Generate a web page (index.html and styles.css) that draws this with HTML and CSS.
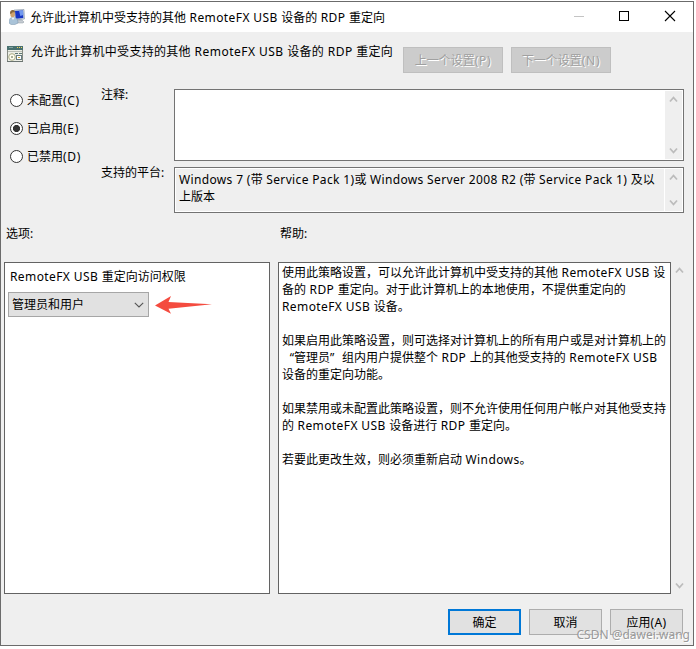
FILE: index.html
```html
<!DOCTYPE html>
<html lang="zh-CN">
<head>
<meta charset="utf-8">
<title>允许此计算机中受支持的其他 RemoteFX USB 设备的 RDP 重定向</title>
<link rel="stylesheet" href="styles.css">
</head>
<body>
<div class="window">
  <header class="titlebar">
    <svg class="app-icon" width="16" height="16" viewBox="0 0 16 16">
      <path d="M5 1l10-.5.5 9.500-9 1z" fill="#c9d3df" stroke="#8493a5" stroke-width=".6"/>
      <path d="M6 2l8-.5.3 7.500-7.500.7z" fill="#1736c4"/>
      <path d="M10 1.800l4-.3.3 4.500-3 1z" fill="#7199ee"/>
      <path d="M8 11h5l2 2-1 1H7z" fill="#c5cbd2" stroke="#8d98a3" stroke-width=".5"/>
      <path d="M0 14c0-4 1.500-6 4-6s5 2 5 6l-3 1.500H2z" fill="#a9c3d8" stroke="#7893aa" stroke-width=".5"/>
      <path d="M2.500 8.500L4 11l1.700-2.500z" fill="#f3f7fa"/>
      <ellipse cx="3.600" cy="5" rx="2.300" ry="3.300" fill="#cfa36b"/>
      <path d="M1 4.500C1 1.500 2.500.8 4 1s2.300 1.500 2 2.500C4.500 3 3 3 2 5z" fill="#87693f"/>
    </svg>
    <span class="title-text line">允许此计算机中受支持的其他<span class="en"> RemoteFX USB </span>设备的<span class="en"> RDP </span>重定向</span>
    <div class="caption">
      <svg width="138" height="30" viewBox="0 0 138 30" fill="none" shape-rendering="crispEdges">
        <path d="M18 14.500h10" stroke="#c4c4c4"/>
        <rect x="63.500" y="9.500" width="9" height="9" stroke="#000"/>
        <path d="M109 9l10 10M119 9l-10 10" stroke="#000" shape-rendering="auto" stroke-width="1.100"/>
      </svg>
    </div>
  </header>

  <section class="heading">
    <svg class="policy-icon" width="16" height="16" viewBox="0 0 16 16">
      <rect x=".5" y=".5" width="15" height="15" fill="#eceee6" stroke="#868a82"/>
      <rect x="0" y="0" width="16" height="4" fill="#48706f"/>
      <path d="M2 1.500h4" stroke="#84a5a3"/>
      <path d="M10 1.500h1M12 1.500h1M14 1.500h1" stroke="#f3d35c"/>
      <path d="M1 5.500h14" stroke="#b9bdb3"/>
      <path d="M8 7.500h3M12 7.500h3" stroke="#5e7774"/>
      <circle cx="5" cy="11" r="3.300" fill="#fffef0" stroke="#a9aa83"/>
      <circle cx="5" cy="11" r="1" fill="#8d947d"/>
      <rect x="9.500" y="9.500" width="5" height="4" fill="#fff" stroke="#667b80"/>
      <path d="M11 11.500h2" stroke="#c6a942"/>
      <path d="M0 15.500h16" stroke="#6b7471"/>
    </svg>
    <span class="heading-text line">允许此计算机中受支持的其他<span class="en"> RemoteFX USB </span>设备的<span class="en"> RDP </span>重定向</span>
    <button class="nav-btn" disabled>上一个设置<span class="en">(P)</span></button>
    <button class="nav-btn" disabled>下一个设置<span class="en">(N)</span></button>
  </section>

  <section class="state">
    <div class="radios">
      <label class="radio"><i class="dot"></i><span>未配置<span class="en">(C)</span></span></label>
      <label class="radio"><i class="dot on"></i><span>已启用<span class="en">(E)</span></span></label>
      <label class="radio"><i class="dot"></i><span>已禁用<span class="en">(D)</span></span></label>
    </div>
    <div class="labels"><span>注释:</span><span>支持的平台:</span></div>
    <div class="fields">
      <div class="field comment">
        <div class="field-text"></div>
        <div class="scroll">
          <svg width="9" height="7" viewBox="0 0 9 7"><path d="M1 5.500l3.500-4 3.500 4"/></svg>
          <svg width="9" height="7" viewBox="0 0 9 7"><path d="M1 1.500l3.500 4 3.500-4"/></svg>
        </div>
      </div>
      <div class="field platform">
        <div class="field-text"><span class="line"><span class="en">Windows 7 (</span>带<span class="en"> Service Pack 1)</span>或<span class="en"> Windows Server 2008 R2 (</span>带<span class="en"> Service Pack 1) </span>及以</span><span class="line">上版本</span></div>
        <div class="scroll">
          <svg width="9" height="7" viewBox="0 0 9 7"><path d="M1 5.500l3.500-4 3.500 4"/></svg>
          <svg width="9" height="7" viewBox="0 0 9 7"><path d="M1 1.500l3.500 4 3.500-4"/></svg>
        </div>
      </div>
    </div>
  </section>

  <section class="captions"><span class="cap-options">选项:</span><span>帮助:</span></section>

  <section class="panels">
    <div class="panel options">
      <div class="option-label line"><span class="en">RemoteFX USB </span>重定向访问权限</div>
      <div class="option-row">
        <div class="select"><span>管理员和用户</span>
          <svg width="10" height="6" viewBox="0 0 10 6" fill="none"><path d="M.8.8L5 5 9.200.8" stroke="#555" stroke-width="1.100"/></svg>
        </div>
        <svg class="arrow" width="58" height="20" viewBox="0 0 58 20"><path d="M0 10.500L16 1l-2.500 6L57 9.300 13.500 13.800l2.500 5z" fill="#f44b3f"/></svg>
      </div>
    </div>
    <div class="panel help">
      <p><span class="line">使用此策略设置，可以允许此计算机中受支持的其他<span class="en"> RemoteFX USB </span>设</span><span class="line">备的<span class="en"> RDP </span>重定向。对于此计算机上的本地使用，不提供重定向的</span><span class="line"><span class="en">RemoteFX USB </span>设备。</span></p>
      <p><span class="line">如果启用此策略设置，则可选择对计算机上的所有用户或是对计算机上的</span><span class="line"><span class="quote open">“</span>管理员<span class="quote">”</span>组内用户提供整个<span class="en"> RDP </span>上的其他受支持的<span class="en"> RemoteFX USB</span></span><span class="line">设备的重定向功能。</span></p>
      <p><span class="line">如果禁用或未配置此策略设置，则不允许使用任何用户帐户对其他受支持</span><span class="line">的<span class="en"> RemoteFX USB </span>设备进行<span class="en"> RDP </span>重定向。</span></p>
      <p><span class="line">若要此更改生效，则必须重新启动<span class="en"> Windows</span>。</span></p>
    </div>
    <div class="scroll tall">
      <svg width="9" height="7" viewBox="0 0 9 7"><path d="M1 5.500l3.500-4 3.500 4"/></svg>
      <svg width="9" height="7" viewBox="0 0 9 7"><path d="M1 1.500l3.500 4 3.500-4"/></svg>
    </div>
  </section>

  <footer class="actions">
    <button class="btn primary">确定</button>
    <button class="btn">取消</button>
    <button class="btn">应用<span class="en">(A)</span></button>
  </footer>
  <div class="watermark">CSDN @dawei.wang</div>
</div>
</body>
</html>
```

FILE: styles.css
```css
* { box-sizing: border-box; }
body {
  margin: 0;
  padding-top: 1px;
  background: #fff;
  color: #000;
  font: 12px/17px "Noto Sans", "Noto Sans CJK SC", sans-serif;
}
svg { display: block; flex: none; }
.line { display: block; white-space: nowrap; }
.en { letter-spacing: .4px; }
.window {
  position: relative;
  width: 694px;
  height: 645px;
  border: 1px solid #6b6b6b;
  background: #efefef;
}
.titlebar {
  display: flex;
  align-items: center;
  height: 30px;
  padding-left: 8px;
  background: #fff;
}
.title-text { margin-left: 5px; }
.caption { margin-left: auto; }
.caption svg { margin-right: -1px; }

.heading { display: flex; height: 57px; padding: 15px 0 0 6px; }
.policy-icon { margin-top: -1px; }
.heading-text { width: 372px; margin: -4px 0 0 8px; letter-spacing: .3px; }
.heading-text .en { letter-spacing: .48px; }
.nav-btn {
  width: 100px;
  height: 26px;
  margin-right: 8px;
  padding: 0;
  border: 1px solid #bfbfbf;
  background: #ccc;
  color: #a0a0a0;
  font: inherit;
  text-shadow: 1px 1px #fff;
}

.state { display: flex; height: 124px; }
.radios { width: 100px; padding: 2px 0 0 9px; }
.radio { display: flex; align-items: center; gap: 4px; height: 28px; margin-top: -5px; margin-bottom: 5px; white-space: nowrap; }
.radio .en, .nav-btn .en { letter-spacing: .7px; }
.dot { width: 13px; height: 13px; border: 1px solid #333; border-radius: 50%; background: #fff; }
.dot.on { background: radial-gradient(circle, #333 3.2px, #fff 3.9px); }
.labels { display: flex; flex-direction: column; gap: 61px; width: 73px; margin-top: -3px; white-space: nowrap; }
.fields { width: 510px; }
.field { display: flex; border: 1px solid #737373; padding: 1px; }
.comment { height: 72px; background: #fff; }
.platform { height: 46px; margin-top: 6px; box-shadow: inset 0 0 0 1px #fff; }
.platform .en { letter-spacing: .35px; }
.field-text { flex: 1; min-width: 0; padding: 2px 0 0 3px; }
.scroll { display: flex; flex-direction: column; justify-content: space-between; align-items: center; width: 17px; padding: 5px 0 5px; background: #efefef; }
.scroll path { fill: none; stroke: #bcbcbc; stroke-width: 1.8; }
.platform .scroll { width: 18px; padding-right: 1px; border-left: 1px solid #fff; }

.captions { display: flex; height: 49px; padding: 12px 0 0 5px; }
.cap-options { width: 274px; }

.panels { display: flex; height: 332px; padding-left: 3px; }
.panel { border: 1px solid #636363; background: #fff; }
.options { width: 266px; margin-right: 8px; padding: 5px 0 0 3px; }
.option-label { padding-left: 2px; }
.option-row { display: flex; gap: 6px; margin-top: 7px; }
.select { display: flex; align-items: center; justify-content: space-between; width: 141px; height: 25px; padding: 0 4px 0 3px; border: 1px solid #a6a6a6; background: #e1e1e1; }
.arrow { margin-top: 3px; }
.help { width: 393px; padding: 1px 0 0 3px; }
.help p { margin: 0 0 17px; }
.quote { display: inline-block; width: 12px; font-family: "Noto Sans", sans-serif; }
.quote.open { text-align: right; }
.tall { padding: 5px 0; }

.actions { display: flex; gap: 8px; padding: 15px 0 0 447px; }
.btn { width: 73px; height: 26px; padding: 0; border: 1px solid #adadad; background: #e1e1e1; color: #000; font: inherit; }
.btn.primary { border: 2px solid #0078d7; }
.watermark {
  position: absolute;
  right: 3px;
  bottom: 0;
  font-size: 12px;
  line-height: 20px;
  color: #999;
  text-shadow: 1px 1px #fff;
  white-space: nowrap;
}
```
